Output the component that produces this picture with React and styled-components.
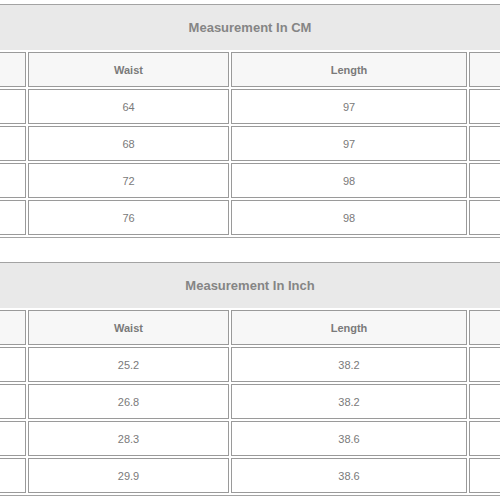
import React from 'react';
import styled, { createGlobalStyle } from 'styled-components';

const GlobalStyle = createGlobalStyle`
  *, *::before, *::after {
    box-sizing: border-box;
  }

  body {
    margin: 0;
    overflow: hidden;
    background: #fff;
    font-family: 'Liberation Sans', Arial, sans-serif;
  }
`;

const Page = styled.div`
  display: flex;
  flex-direction: column;
  gap: 24px;
  width: 700px;
  margin-left: -100px;
  padding-top: 4px;
`;

const Block = styled.section`
  border: 1px solid #a3a3a3;
`;

const Title = styled.h2`
  display: flex;
  align-items: center;
  justify-content: center;
  height: 45px;
  margin: 0;
  padding-bottom: 1px;
  background: #e9e9e9;
  color: #858585;
  font-size: 13px;
  font-weight: bold;
`;

const Table = styled.table`
  width: 100%;
  table-layout: fixed;
  border-collapse: separate;
  border-spacing: 2px;
`;

const Col = styled.col`
  width: ${({ width }) => width}px;
`;

const Cell = styled.td`
  height: 35px;
  padding: 0;
  border: 1px solid #9a9a9a;
  background: ${({ head }) => (head ? '#f7f7f7' : '#fff')};
  color: #7a7a7a;
  font-size: 11px;
  text-align: center;
  vertical-align: middle;
`;

// the outer columns sit past the edges of the view, so they carry no text here
const COLUMNS = [
  { key: 'size', label: '', width: 123 },
  { key: 'waist', label: 'Waist', width: 201 },
  { key: 'length', label: 'Length', width: 236 },
  { key: 'hip', label: '', width: 128 },
];

const TABLES = [
  {
    title: 'Measurement In CM',
    rows: [
      { waist: '64', length: '97' },
      { waist: '68', length: '97' },
      { waist: '72', length: '98' },
      { waist: '76', length: '98' },
    ],
  },
  {
    title: 'Measurement In Inch',
    rows: [
      { waist: '25.2', length: '38.2' },
      { waist: '26.8', length: '38.2' },
      { waist: '28.3', length: '38.6' },
      { waist: '29.9', length: '38.6' },
    ],
  },
];

const SizeTable = ({ title, rows }) => (
  <Block>
    <Title>{title}</Title>
    <Table>
      <colgroup>
        {COLUMNS.map((c) => (
          <Col key={c.key} width={c.width} />
        ))}
      </colgroup>
      <thead>
        <tr>
          {COLUMNS.map((c) => (
            <Cell as="th" head key={c.key}>
              {c.label}
            </Cell>
          ))}
        </tr>
      </thead>
      <tbody>
        {rows.map((row, i) => (
          <tr key={i}>
            {COLUMNS.map((c) => (
              <Cell key={c.key}>{row[c.key] || ''}</Cell>
            ))}
          </tr>
        ))}
      </tbody>
    </Table>
  </Block>
);

const App = () => (
  <>
    <GlobalStyle />
    <Page>
      {TABLES.map((t) => (
        <SizeTable key={t.title} title={t.title} rows={t.rows} />
      ))}
    </Page>
  </>
);

export default App;
